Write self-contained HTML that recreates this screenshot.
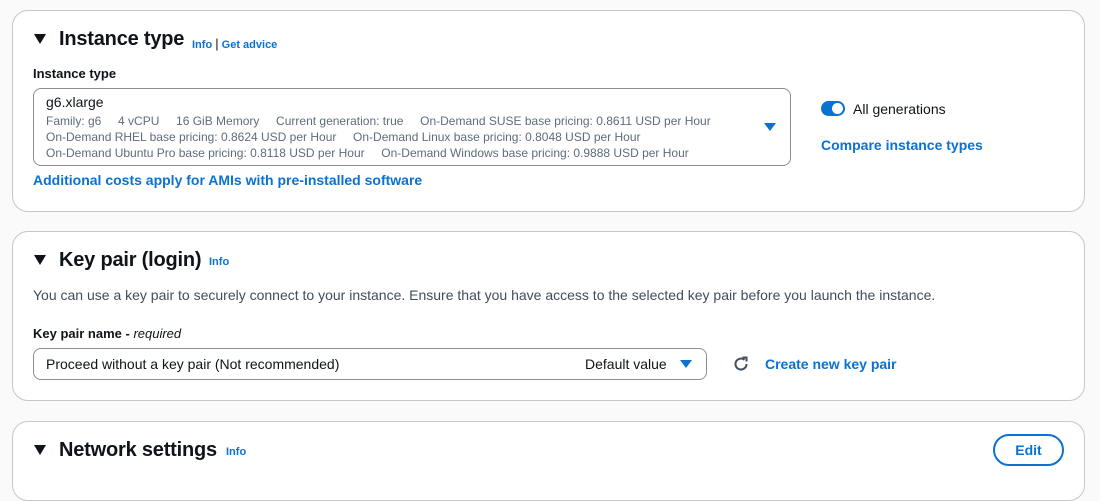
<!DOCTYPE html>
<html><head><style>
body{margin:0;width:1100px;height:477px;background:#fafafa;font-family:"Liberation Sans",sans-serif;color:#0f141a;position:relative;overflow:hidden}
.p{position:absolute;left:12px;width:1073px;background:#fff;border:1px solid #c6c6cd;border-radius:16px;box-sizing:border-box}
.a{position:absolute;white-space:nowrap}
.h{font-size:20px;font-weight:bold;letter-spacing:-0.2px}
.tri{width:0;height:0;border-left:6.5px solid transparent;border-right:6.5px solid transparent;border-top:10px solid #0f141a}
.info{font-size:11px;font-weight:bold;color:#0972d3}
.lnk{font-size:14px;font-weight:bold;color:#0972d3}
.lbl{font-size:13px;font-weight:bold}
.sm{font-size:12px;color:#5f6b7a}
.box{position:absolute;border:1px solid #8c8c94;border-radius:8px;box-sizing:border-box;background:#fff}
.dd{width:0;height:0;border-left:6px solid transparent;border-right:6px solid transparent;border-top:8px solid #0972d3}
</style></head><body>
<div class="p" style="top:10px;height:202px"></div>
<div class="a tri" style="left:34px;top:34px"></div>
<div class="a h" style="left:59px;top:28px">Instance type</div>
<div class="a info" style="left:192px;top:36px">Info <span style="color:#0f141a;font-weight:normal;font-size:13px">|</span> Get advice</div>
<div class="a lbl" style="left:33px;top:66px">Instance type</div>
<div class="box" style="left:33px;top:88px;width:758px;height:78px"></div>
<div class="a" style="left:46px;top:94px;font-size:14px">g6.xlarge</div>
<div class="a sm" style="left:46px;top:114px">Family: g6&nbsp;&nbsp;&nbsp;&nbsp;&nbsp;4 vCPU&nbsp;&nbsp;&nbsp;&nbsp;&nbsp;16 GiB Memory&nbsp;&nbsp;&nbsp;&nbsp;&nbsp;Current generation: true&nbsp;&nbsp;&nbsp;&nbsp;&nbsp;On-Demand SUSE base pricing: 0.8611 USD per Hour</div>
<div class="a sm" style="left:46px;top:130px">On-Demand RHEL base pricing: 0.8624 USD per Hour&nbsp;&nbsp;&nbsp;&nbsp;&nbsp;On-Demand Linux base pricing: 0.8048 USD per Hour</div>
<div class="a sm" style="left:46px;top:146px">On-Demand Ubuntu Pro base pricing: 0.8118 USD per Hour&nbsp;&nbsp;&nbsp;&nbsp;&nbsp;On-Demand Windows base pricing: 0.9888 USD per Hour</div>
<div class="a dd" style="left:764px;top:123px"></div>
<div class="a lnk" style="left:33px;top:172px">Additional costs apply for AMIs with pre-installed software</div>
<div class="a" style="left:821px;top:101px;width:24px;height:15px;border-radius:8px;background:#0972d3"></div>
<div class="a" style="left:832px;top:103px;width:11px;height:11px;border-radius:50%;background:#fff"></div>
<div class="a" style="left:853px;top:101px;font-size:14px">All generations</div>
<div class="a lnk" style="left:821px;top:137px">Compare instance types</div>

<div class="p" style="top:231px;height:170px"></div>
<div class="a tri" style="left:34px;top:255px"></div>
<div class="a h" style="left:59px;top:249px">Key pair (login)</div>
<div class="a info" style="left:209px;top:256px">Info</div>
<div class="a" style="left:33px;top:287px;font-size:14px;color:#414d5c">You can use a key pair to securely connect to your instance. Ensure that you have access to the selected key pair before you launch the instance.</div>
<div class="a lbl" style="left:33px;top:326px">Key pair name - <i style="font-weight:normal">required</i></div>
<div class="box" style="left:33px;top:348px;width:674px;height:32px"></div>
<div class="a" style="left:46px;top:356px;font-size:14px">Proceed without a key pair (Not recommended)</div>
<div class="a" style="left:585px;top:356px;font-size:14px">Default value</div>
<div class="a dd" style="left:680px;top:360px"></div>
<svg class="a" style="left:732px;top:355px" width="18" height="18" viewBox="0 0 18 18"><path d="M14.5 9A5.5 5.5 0 1 1 12.5 4.8" fill="none" stroke="#414d5c" stroke-width="2"/><path d="M10.5 2.5h4v4" fill="none" stroke="#414d5c" stroke-width="2"/></svg>
<div class="a lnk" style="left:765px;top:356px">Create new key pair</div>

<div class="p" style="top:421px;height:80px"></div>
<div class="a tri" style="left:34px;top:445px"></div>
<div class="a h" style="left:59px;top:439px">Network settings</div>
<div class="a info" style="left:226px;top:446px">Info</div>
<div class="a" style="left:993px;top:434px;width:71px;height:32px;box-sizing:border-box;border:2px solid #0972d3;border-radius:16px;text-align:center;line-height:28px" ><span class="lnk">Edit</span></div>
</body></html>
